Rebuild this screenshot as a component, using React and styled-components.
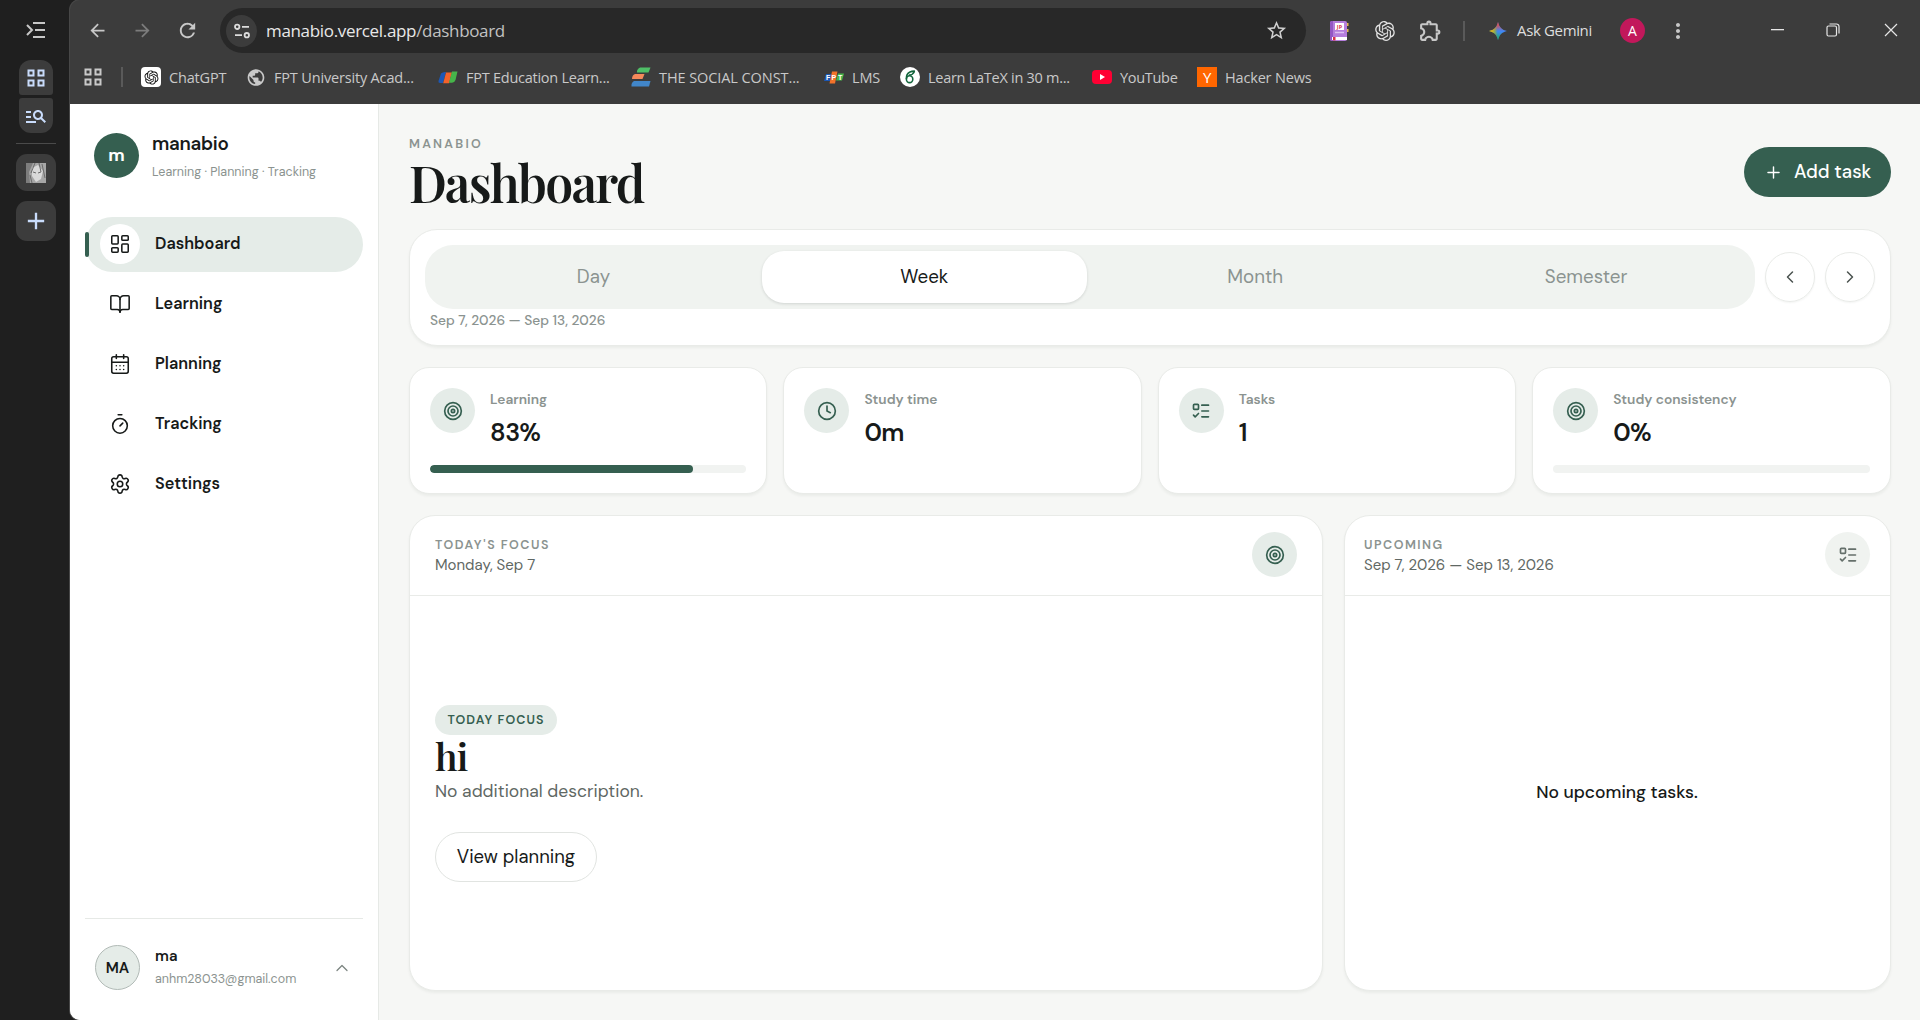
import { useState } from 'react'
import styled, { createGlobalStyle } from 'styled-components'
import {
	BookOpen,
	CalendarDays,
	ChevronLeft,
	ChevronRight,
	ChevronUp,
	Clock,
	LayoutDashboard,
	ListTodo,
	Plus,
	Settings,
	Target,
	Timer,
} from 'lucide-react'
import {
	MdAdd,
	MdArrowBack,
	MdArrowForward,
	MdManageSearch,
	MdMoreVert,
	MdOutlineExtension,
	MdPublic,
	MdRefresh,
	MdStarBorder,
} from 'react-icons/md'
import { RiOpenaiFill } from 'react-icons/ri'

const sans = "'DM Sans', Lato, sans-serif"
const serif = "'Playfair Display', 'Liberation Serif', serif"
const system = "'Segoe UI', 'Open Sans', sans-serif"

const GlobalStyle = createGlobalStyle`
	* {
		box-sizing: border-box;
	}
	body {
		margin: 0;
		background: #1f1f1f;
		font-family: ${sans};
		color: #171a19;
	}
	h1, h2, p {
		margin: 0;
	}
`

const Screen = styled.div`
	display: flex;
	width: 1920px;
	height: 1020px;
	overflow: hidden;
	background: #1f1f1f;
`

/* ---------- vertical tab strip ---------- */

const TabStrip = styled.aside`
	display: flex;
	flex-direction: column;
	align-items: center;
	width: 70px;
	padding: 21px 0 0 1px;
	color: #c7c7c7;
`

const TabGroup = styled.div`
	display: flex;
	flex-direction: column;
	gap: 3px;
	margin-top: 21px;
`

const TabGroupButton = styled.div`
	display: flex;
	align-items: center;
	justify-content: center;
	width: 34px;
	height: 35px;
	background: #3c3c3c;
	color: #c9dcfb;
	border-radius: ${(props) => (props.$last ? '3px 3px 12px 12px' : '12px 12px 3px 3px')};
`

const StripLine = styled.div`
	width: 40px;
	height: 1px;
	margin: 10px 0;
	background: #4a4a4a;
`

const TabButton = styled.div`
	display: flex;
	align-items: center;
	justify-content: center;
	width: 40px;
	height: ${(props) => props.$height};
	margin-bottom: 10px;
	background: #3c3c3c;
	color: #c9dcfb;
	border-radius: 11px;
`

/* ---------- browser ---------- */

const Browser = styled.div`
	display: flex;
	flex-direction: column;
	flex: 1;
	overflow: hidden;
	border-radius: 10px 0 0 10px;
	background: #3c3c3c;
	box-shadow: 0 0 0 1px #474747;
`

const BrowserBar = styled.div`
	display: flex;
	align-items: center;
	height: 45px;
	margin-top: 8px;
	padding-left: 16px;
	color: #c7c7c7;
	font-family: ${system};
`

const BarButton = styled.div`
	display: flex;
	align-items: center;
	justify-content: center;
	flex-shrink: 0;
	width: ${(props) => props.$width || '45px'};
	color: ${(props) => props.$color || '#c7c7c7'};
`

const AddressBar = styled.div`
	display: flex;
	align-items: center;
	flex-shrink: 0;
	width: 1086px;
	height: 45px;
	margin-left: 20px;
	padding: 0 18px 0 6px;
	background: #282828;
	border-radius: 23px;
	font-size: 17px;
	color: #e8e8e8;
`

const SiteInfo = styled.div`
	display: flex;
	align-items: center;
	justify-content: center;
	width: 31px;
	height: 32px;
	margin-right: 9px;
	background: #3c3c3c;
	border-radius: 50%;
`

const Url = styled.span`
	flex: 1;
	letter-spacing: -0.33px;
	span {
		color: #c2c2c2;
	}
`

const BarLine = styled.div`
	width: 2px;
	height: 20px;
	background: #5a5a5a;
`

const AskGemini = styled.div`
	display: flex;
	align-items: center;
	gap: 9px;
	width: 109px;
	margin-left: 23px;
	font-size: 15px;
	letter-spacing: -0.35px;
	white-space: nowrap;
	color: #dedede;
	span {
		padding-bottom: 2px;
	}
`

const ProfileBadge = styled.div`
	display: flex;
	align-items: center;
	justify-content: center;
	width: 25px;
	height: 25px;
	margin-left: 23px;
	background: #c2185b;
	border-radius: 50%;
	color: #fff;
	font-size: 14px;
`

const WindowButtons = styled.div`
	display: flex;
	align-items: center;
	margin: 0 0 2px auto;
`

const Bookmarks = styled.div`
	display: flex;
	align-items: center;
	height: 51px;
	padding: 0 0 3px 14px;
	color: #c9c9c9;
	font-family: ${system};
	font-size: 14.5px;
`

const Bookmark = styled.div`
	display: flex;
	align-items: center;
	width: ${(props) => props.$width};
	white-space: nowrap;
	letter-spacing: ${(props) => props.$spacing || '-0.17px'};
	&:nth-child(3) {
		margin-left: 18px;
	}
`

const BookmarkIcon = styled.span`
	display: flex;
	align-items: center;
	justify-content: center;
	width: 20px;
	height: 20px;
	margin-right: 8px;
	background: ${(props) => props.$bg || 'none'};
	border-radius: ${(props) => props.$radius || '0'};
	color: ${(props) => props.$color || '#c9c9c9'};
	font-size: 15px;
`

/* ---------- app shell ---------- */

const Page = styled.div`
	display: flex;
	flex: 1;
	background: #f6f7f5;
`

const Sidebar = styled.nav`
	display: flex;
	flex-direction: column;
	width: 309px;
	padding: 29px 15px 30px;
	background: #fff;
	border-right: 1px solid #e6e9e6;
`

const Brand = styled.div`
	display: flex;
	align-items: center;
	gap: 13px;
	height: 45px;
	margin: 0 0 39px 9px;
`

const BrandMark = styled.div`
	display: flex;
	align-items: center;
	justify-content: center;
	width: 45px;
	height: 45px;
	padding-bottom: 1px;
	background: #355f50;
	border-radius: 50%;
	color: #fff;
	font-size: 17.5px;
	font-weight: 700;
`

const BrandName = styled.div`
	font-size: 18.75px;
	font-weight: 600;
	line-height: 26px;
	letter-spacing: -0.3px;
`

const BrandNote = styled.div`
	margin-top: 6px;
	font-size: 12.5px;
	line-height: 18px;
	color: #8b9390;
`

const NavList = styled.div`
	display: flex;
	flex-direction: column;
	gap: 5px;
`

const NavItem = styled.div`
	position: relative;
	display: flex;
	align-items: center;
	gap: 15px;
	height: 55px;
	padding: 0 0 2px 15px;
	border-radius: 28px;
	background: ${(props) => (props.$isActive ? '#e5ece8' : 'transparent')};
	font-size: 16.25px;
	font-weight: 600;
	&::before {
		content: '';
		position: absolute;
		left: 0;
		top: 15px;
		width: 4px;
		height: 25px;
		border-radius: 2px;
		background: ${(props) => (props.$isActive ? '#355f50' : 'transparent')};
	}
`

const NavIcon = styled.span`
	display: flex;
	align-items: center;
	justify-content: center;
	width: 40px;
	height: 40px;
	border-radius: 50%;
	background: ${(props) => (props.$isActive ? '#fff' : 'transparent')};
`

const Account = styled.div`
	display: flex;
	align-items: center;
	margin-top: auto;
	padding: 26px 11px 0 10px;
	border-top: 1px solid #e6e9e6;
`

const AccountMark = styled.div`
	display: flex;
	align-items: center;
	justify-content: center;
	width: 45px;
	height: 45px;
	margin-right: 15px;
	background: #e5ece8;
	border: 1px solid #b1bab6;
	border-radius: 50%;
	font-size: 15px;
	font-weight: 600;
`

const AccountText = styled.div`
	flex: 1;
	line-height: 22px;
`

const AccountName = styled.div`
	margin-top: -1px;
	font-size: 15px;
	font-weight: 600;
`

const AccountMail = styled.div`
	margin-top: 1px;
	font-size: 12.5px;
	color: #8b9390;
`

const Main = styled.main`
	flex: 1;
	padding: 30px 29.5px 0 30px;
`

const Header = styled.header`
	display: flex;
	align-items: center;
	justify-content: space-between;
	height: 76px;
	margin-bottom: 19px;
`

const Overline = styled.div`
	font-size: 12.5px;
	font-weight: 600;
	line-height: 20px;
	letter-spacing: ${(props) => props.$spacing || '2.25px'};
	color: #8b9390;
`

const Title = styled.h1`
	margin: 1px 0 -1px;
	font-family: ${serif};
	font-size: 50px;
	font-weight: 600;
	line-height: 56px;
	letter-spacing: -1.75px;
`

const AddButton = styled.button`
	display: flex;
	align-items: center;
	gap: 11px;
	height: 50px;
	width: 147px;
	padding: 0 0 0 20.5px;
	border: 0;
	border-radius: 25px;
	background: #355f50;
	color: #fff;
	font-family: inherit;
	font-size: 18.5px;
	font-weight: 500;
`

const Card = styled.section`
	background: #fff;
	border: 1px solid #e9ebe8;
	border-radius: ${(props) => props.$radius || '25px'};
	box-shadow: 0 2px 3px rgba(20, 30, 25, 0.05);
`

const RangeCard = styled(Card)`
	height: 117.25px;
	padding: 15px;
	margin-bottom: 21px;
`

const RangeRow = styled.div`
	display: flex;
	align-items: center;
	gap: 10px;
`

const Segments = styled.div`
	display: grid;
	grid-template-columns: repeat(4, 1fr);
	gap: 6px;
	flex: 1;
	height: 64px;
	padding: 6px;
	border-radius: 28px;
	background: #f0f3f0;
`

const Segment = styled.div`
	display: flex;
	align-items: center;
	justify-content: center;
	padding-bottom: 1px;
	border-radius: 22px;
	font-size: 18.75px;
	background: ${(props) => (props.$isActive ? '#fff' : 'transparent')};
	color: ${(props) => (props.$isActive ? '#171a19' : '#8b9390')};
	box-shadow: ${(props) => (props.$isActive ? '0 1px 3px rgba(20, 30, 25, 0.14)' : 'none')};
`

const RoundButton = styled.div`
	display: flex;
	align-items: center;
	justify-content: center;
	width: 50px;
	height: 50px;
	border: 1px solid #e9ebe8;
	border-radius: 50%;
	color: #4b5350;
	box-shadow: 0 1px 2px rgba(20, 30, 25, 0.05);
`

const RangeLabel = styled.div`
	padding-left: 5px;
	font-size: 13.75px;
	font-weight: 500;
	line-height: 23px;
	color: #8b9390;
`

const Stats = styled.div`
	display: grid;
	grid-template-columns: repeat(4, 1fr);
	gap: 16px;
	margin-bottom: 21px;
`

const StatCard = styled(Card)`
	display: flex;
	flex-direction: column;
	justify-content: space-between;
	height: 126.25px;
	padding: 20px;
`

const StatTop = styled.div`
	display: flex;
	gap: 15px;
`

const IconCircle = styled.div`
	display: flex;
	align-items: center;
	justify-content: center;
	width: 45px;
	height: 45px;
	border-radius: 50%;
	background: ${(props) => (props.$muted ? '#f0f3f0' : '#e5ece8')};
	color: ${(props) => (props.$muted ? '#65706b' : '#355f50')};
`

const StatLabel = styled.div`
	font-size: 13.75px;
	font-weight: 600;
	line-height: 22px;
	color: #8b9390;
`

const StatValue = styled.div`
	font-size: 25px;
	font-weight: 600;
	line-height: 30px;
	padding-top: 8px;
	letter-spacing: -0.5px;
`

const Progress = styled.div`
	height: 8px;
	border-radius: 4px;
	background: #f1f3f1;
	overflow: hidden;
`

const ProgressFill = styled.div`
	height: 100%;
	border-radius: 4px;
	background: #355f50;
`

const Panels = styled.div`
	display: grid;
	grid-template-columns: 914px 1fr;
	gap: 20.5px;
`

const Panel = styled(Card)`
	display: flex;
	flex-direction: column;
	height: 476px;
`

const PanelHead = styled.div`
	display: flex;
	align-items: center;
	justify-content: space-between;
	height: 80px;
	padding: 0 ${(props) => props.$inset} 1px;
	border-bottom: 1px solid #e9ebe8;
`

const PanelDate = styled.div`
	font-size: 15px;
	line-height: 20px;
	color: #5f6864;
`

const FocusBody = styled.div`
	display: flex;
	flex: 1;
	flex-direction: column;
	align-items: flex-start;
	justify-content: center;
	padding: 2px 25px 0;
`

const FocusPill = styled.span`
	display: flex;
	align-items: center;
	justify-content: center;
	width: 122px;
	height: 30px;
	border-radius: 15px;
	background: #e5ece8;
	color: #355f50;
	font-size: 12.5px;
	font-weight: 600;
	letter-spacing: 1.1px;
`

const FocusTitle = styled.h2`
	margin-bottom: 2px;
	font-family: ${serif};
	font-size: 37.5px;
	font-weight: 600;
	line-height: 41px;
	letter-spacing: -0.75px;
`

const FocusNote = styled.p`
	font-size: 17.5px;
	line-height: 26px;
	color: #5f6864;
`

const OutlineButton = styled.button`
	width: 162px;
	height: 50px;
	margin-top: 28px;
	border: 1px solid #e1e4e1;
	border-radius: 25px;
	background: #fff;
	color: #171a19;
	font-family: inherit;
	font-size: 18.5px;
`

const EmptyBody = styled.div`
	display: flex;
	flex: 1;
	align-items: center;
	justify-content: center;
	padding-bottom: 1px;
	font-size: 17.5px;
	font-weight: 500;
`

/* ---------- drawings ---------- */

function CollapseIcon() {
	return (
		<svg width="20" height="18" viewBox="0 0 20 18" fill="none" stroke="currentColor" strokeWidth="2">
			<path d="M7 2h12M9 9h10M7 16h12M1 4l5 5-5 5" />
		</svg>
	)
}

function GridIcon({ size }) {
	return (
		<svg width={size} height={size} viewBox="0 0 18 18" fill="none" stroke="currentColor" strokeWidth="2">
			<path d="M1.5 1.5h5v5h-5zM11.5 1.5h5v5h-5zM1.5 11.5h5v5h-5zM11.5 11.5h5v5h-5z" />
		</svg>
	)
}

function PortraitIcon() {
	return (
		<svg width="20" height="20" viewBox="0 0 20 20">
			<rect width="20" height="20" fill="#a6a6a6" />
			<path d="M0 0h7L3 9l1 11H0z" fill="#7d7d7d" />
			<path d="M6 5l6-3 5 6-2 8-5 3-4-6z" fill="#d9d9d9" />
			<path d="M9 0L5 10M13 0l2 9M16 1l3 14M7 9l3 1M12 10l3-1M4 12l2 8" stroke="#6b6b6b" fill="none" />
		</svg>
	)
}

function TuneIcon() {
	return (
		<svg width="16" height="16" viewBox="0 0 16 16" fill="none" stroke="#dcdcdc" strokeWidth="1.8">
			<circle cx="3.2" cy="3.8" r="2.2" />
			<path d="M8 3.8h7M1 12.2h7" />
			<circle cx="12.8" cy="12.2" r="2.2" />
		</svg>
	)
}

function DictionaryIcon() {
	return (
		<svg width="20" height="22" viewBox="0 0 20 22">
			<rect x="1" y="1" width="17" height="20" rx="2" fill="#b57edc" />
			<path d="M1 3a2 2 0 012-2h1v20H3a2 2 0 01-2-2z" fill="#9457c4" />
			<path d="M18 3h1.5v3H18zM18 9h1.5v3H18z" fill="#e6b84a" />
			<rect x="6" y="3" width="9" height="7" fill="#fff" />
			<text x="10.5" y="8.6" fontSize="5.5" fontWeight="700" fill="#d8344a" textAnchor="middle">JP</text>
			<path d="M6 12.5h9" stroke="#dfc1f2" strokeWidth="1.5" />
			<rect x="3" y="17" width="15" height="3" fill="#fff" />
			<rect x="4" y="17" width="2.5" height="3.5" fill="#d8344a" />
		</svg>
	)
}

function GeminiIcon() {
	return (
		<svg width="20" height="20" viewBox="0 0 20 20">
			<defs>
				<linearGradient id="gemBlue" x1="0" y1="0.5" x2="1" y2="0.5">
					<stop offset="0.3" stopColor="#4fa08b" />
					<stop offset="0.5" stopColor="#3f86f5" />
				</linearGradient>
				<linearGradient id="gemRed" x1="0.5" y1="0" x2="0.5" y2="1">
					<stop offset="0.1" stopColor="#f2483c" />
					<stop offset="0.5" stopColor="#f2483c" stopOpacity="0" />
				</linearGradient>
				<linearGradient id="gemYellow" x1="0" y1="0.5" x2="1" y2="0.5">
					<stop offset="0.1" stopColor="#fbbc04" />
					<stop offset="0.45" stopColor="#fbbc04" stopOpacity="0" />
				</linearGradient>
				<linearGradient id="gemGreen" x1="0.5" y1="1" x2="0.5" y2="0">
					<stop offset="0.05" stopColor="#21b15a" />
					<stop offset="0.45" stopColor="#21b15a" stopOpacity="0" />
				</linearGradient>
			</defs>
			{['gemBlue', 'gemGreen', 'gemRed', 'gemYellow'].map((id) => (
				<path key={id} fill={`url(#${id})`} d="M10 1c1 5 4 8 9 9-5 1-8 4-9 9-1-5-4-8-9-9 5-1 8-4 9-9z" />
			))}
		</svg>
	)
}

function FlagIcon() {
	return (
		<svg width="20" height="13" viewBox="0 0 20 13">
			<path d="M3 2.5Q5 .5 8 1L5 12H2Q0 12 .5 10z" fill="#1c57b5" />
			<path d="M8 1.4h6l-3 10.8H5.2z" fill="#f2622a" />
			<path d="M14 .6h5.5L17.5 9q-1 2.8-3.5 2.8h-3z" fill="#46b54a" />
		</svg>
	)
}

function BooksIcon() {
	return (
		<svg width="20" height="20" viewBox="0 0 20 20">
			<path d="M9 .5h10.5l-2 5H6q-.5-3 3-5z" fill="#4fbf67" />
			<path d="M4 7h9.5l-2 5H1q0-4 3-5z" fill="#f5895a" />
			<path d="M3 14h16.5L18 19.500H.5q-.5-4 2.5-5.500z" fill="#4186c9" />
		</svg>
	)
}

function FptIcon() {
	return (
		<svg width="20" height="13" viewBox="0 0 20 13" fontFamily="Liberation Sans" fontWeight="700" fontSize="7" fill="#fff">
			<path d="M2 3h6L6 10H0z" fill="#1c57b5" />
			<path d="M8 .5h5.5L11 12.5H5.5z" fill="#f2722a" />
			<path d="M14 2.5h6L18 9.5h-6z" fill="#46b54a" />
			<text x="2" y="9">F</text>
			<text x="7.5" y="9">P</text>
			<text x="14" y="8.5">T</text>
		</svg>
	)
}

function OverleafIcon() {
	return (
		<svg width="20" height="20" viewBox="0 0 20 20" fill="none" stroke="#13653d" strokeWidth="1.6">
			<ellipse cx="9.6" cy="12.2" rx="3.2" ry="3.4" />
			<path d="M6.4 12Q6 7 10 5q2-1 5-.8M9 8q3.5.3 5.5-3.5" />
		</svg>
	)
}

function YoutubeIcon() {
	return (
		<svg width="20" height="14" viewBox="0 0 20 14">
			<rect width="20" height="14" rx="4" fill="#f03" />
			<path d="M8 4l5 3-5 3z" fill="#fff" />
		</svg>
	)
}

const navItems = [
	{ label: 'Dashboard', icon: LayoutDashboard },
	{ label: 'Learning', icon: BookOpen },
	{ label: 'Planning', icon: CalendarDays },
	{ label: 'Tracking', icon: Timer },
	{ label: 'Settings', icon: Settings },
]

const ranges = ['Day', 'Week', 'Month', 'Semester']

const stats = [
	{ label: 'Learning', value: '83%', icon: Target, progress: 83 },
	{ label: 'Study time', value: '0m', icon: Clock },
	{ label: 'Tasks', value: '1', icon: ListTodo },
	{ label: 'Study consistency', value: '0%', icon: Target, progress: 0 },
]

function BrowserChrome() {
	return (
		<>
			<BrowserBar>
				<BarButton $width="23px"><MdArrowBack size={21} /></BarButton>
				<BarButton $width="66px" $color="#7c7c7c"><MdArrowForward size={21} /></BarButton>
				<BarButton $width="25px"><MdRefresh size={23} /></BarButton>
				<AddressBar>
					<SiteInfo><TuneIcon /></SiteInfo>
					<Url>manabio.vercel.app<span>/dashboard</span></Url>
					<MdStarBorder size={23} color="#d0d0d0" />
				</AddressBar>
				<BarButton $width="66px"><DictionaryIcon /></BarButton>
				<BarButton $width="25px" $color="#e2e2e2"><RiOpenaiFill size={24} /></BarButton>
				<BarButton $width="66px"><MdOutlineExtension size={25} /></BarButton>
				<BarLine />
				<AskGemini><GeminiIcon /><span>Ask Gemini</span></AskGemini>
				<ProfileBadge>A</ProfileBadge>
				<BarButton $width="65px"><MdMoreVert size={24} /></BarButton>
				<WindowButtons>
					<BarButton $width="56px" $color="#e6e6e6">
						<svg width="13" height="2"><rect width="13" height="1.3" fill="currentColor" /></svg>
					</BarButton>
					<BarButton $width="56px" $color="#e6e6e6">
						<svg width="14" height="14" viewBox="0 0 14 14" fill="none" stroke="currentColor" strokeWidth="1.2">
							<rect x="1" y="3" width="9.5" height="10" rx="1.5" />
							<path d="M3.5 1h7A2.500 2.500 0 0113 3.500v7" />
						</svg>
					</BarButton>
					<BarButton $width="59px" $color="#e6e6e6">
						<svg width="14" height="14" viewBox="0 0 14 14" stroke="currentColor" strokeWidth="1.2">
							<path d="M1 1l12 12M13 1L1 13" />
						</svg>
					</BarButton>
				</WindowButtons>
			</BrowserBar>
			<Bookmarks>
				<Bookmark $width="37px"><GridIcon size={18} /></Bookmark>
				<BarLine />
				<Bookmark $width="105px">
					<BookmarkIcon $bg="#fff" $radius="4px" $color="#111"><RiOpenaiFill size={17} /></BookmarkIcon>ChatGPT
				</Bookmark>
				<Bookmark $width="192px"><BookmarkIcon><MdPublic size={21} /></BookmarkIcon>FPT University Acad...</Bookmark>
				<Bookmark $width="193px" $spacing="-0.25px"><BookmarkIcon><FlagIcon /></BookmarkIcon>FPT Education Learn...</Bookmark>
				<Bookmark $width="193px" $spacing="-0.08px"><BookmarkIcon><BooksIcon /></BookmarkIcon>THE SOCIAL CONST...</Bookmark>
				<Bookmark $width="76px"><BookmarkIcon><FptIcon /></BookmarkIcon>LMS</Bookmark>
				<Bookmark $width="192px" $spacing="-0.27px"><BookmarkIcon $bg="#fff" $radius="50%"><OverleafIcon /></BookmarkIcon>Learn LaTeX in 30 m...</Bookmark>
				<Bookmark $width="105px" $spacing="-0.3px"><BookmarkIcon><YoutubeIcon /></BookmarkIcon>YouTube</Bookmark>
				<Bookmark $width="120px"><BookmarkIcon $bg="#f60" $color="#fff">Y</BookmarkIcon>Hacker News</Bookmark>
			</Bookmarks>
		</>
	)
}

function App() {
	const [range, setRange] = useState('Week')

	return (
		<Screen>
			<GlobalStyle />
			<TabStrip>
				<CollapseIcon />
				<TabGroup>
					<TabGroupButton><GridIcon size={18} /></TabGroupButton>
					<TabGroupButton $last><MdManageSearch size={24} /></TabGroupButton>
				</TabGroup>
				<StripLine />
				<TabButton $height="37px"><PortraitIcon /></TabButton>
				<TabButton $height="40px"><MdAdd size={28} /></TabButton>
			</TabStrip>
			<Browser>
				<BrowserChrome />
				<Page>
					<Sidebar>
						<Brand>
							<BrandMark>m</BrandMark>
							<div>
								<BrandName>manabio</BrandName>
								<BrandNote>Learning · Planning · Tracking</BrandNote>
							</div>
						</Brand>
						<NavList>
							{navItems.map(({ label, icon: Icon }, index) => (
								<NavItem key={label} $isActive={index === 0}>
									<NavIcon $isActive={index === 0}><Icon size={22} strokeWidth={1.7} /></NavIcon>
									{label}
								</NavItem>
							))}
						</NavList>
						<Account>
							<AccountMark>MA</AccountMark>
							<AccountText>
								<AccountName>ma</AccountName>
								<AccountMail>anhm28033@gmail.com</AccountMail>
							</AccountText>
							<ChevronUp size={20} strokeWidth={1.5} color="#7c8581" />
						</Account>
					</Sidebar>
					<Main>
						<Header>
							<div>
								<Overline>MANABIO</Overline>
								<Title>Dashboard</Title>
							</div>
							<AddButton><Plus size={19} strokeWidth={1.8} />Add task</AddButton>
						</Header>
						<RangeCard $radius="28px">
							<RangeRow>
								<Segments>
									{ranges.map((name) => (
										<Segment key={name} $isActive={range === name} onClick={() => setRange(name)}>{name}</Segment>
									))}
								</Segments>
								<RoundButton><ChevronLeft size={20} strokeWidth={1.8} /></RoundButton>
								<RoundButton><ChevronRight size={20} strokeWidth={1.8} /></RoundButton>
							</RangeRow>
							<RangeLabel>Sep 7, 2026 — Sep 13, 2026</RangeLabel>
						</RangeCard>
						<Stats>
							{stats.map(({ label, value, icon: Icon, progress }) => (
								<StatCard key={label} $radius="20px">
									<StatTop>
										<IconCircle><Icon size={20} strokeWidth={2} /></IconCircle>
										<div>
											<StatLabel>{label}</StatLabel>
											<StatValue>{value}</StatValue>
										</div>
									</StatTop>
									{progress !== undefined && (
										<Progress><ProgressFill style={{ width: `${progress}%` }} /></Progress>
									)}
								</StatCard>
							))}
						</Stats>
						<Panels>
							<Panel $radius="26px">
								<PanelHead $inset="25px">
									<div>
										<Overline $spacing="1.5px">TODAY'S FOCUS</Overline>
										<PanelDate>Monday, Sep 7</PanelDate>
									</div>
									<IconCircle><Target size={20} strokeWidth={2} /></IconCircle>
								</PanelHead>
								<FocusBody>
									<FocusPill>TODAY FOCUS</FocusPill>
									<FocusTitle>hi</FocusTitle>
									<FocusNote>No additional description.</FocusNote>
									<OutlineButton>View planning</OutlineButton>
								</FocusBody>
							</Panel>
							<Panel $radius="26px">
								<PanelHead $inset="19.5px">
									<div>
										<Overline $spacing="1.5px">UPCOMING</Overline>
										<PanelDate>Sep 7, 2026 — Sep 13, 2026</PanelDate>
									</div>
									<IconCircle $muted><ListTodo size={20} strokeWidth={2} /></IconCircle>
								</PanelHead>
								<EmptyBody>No upcoming tasks.</EmptyBody>
							</Panel>
						</Panels>
					</Main>
				</Page>
			</Browser>
		</Screen>
	)
}

export default App
